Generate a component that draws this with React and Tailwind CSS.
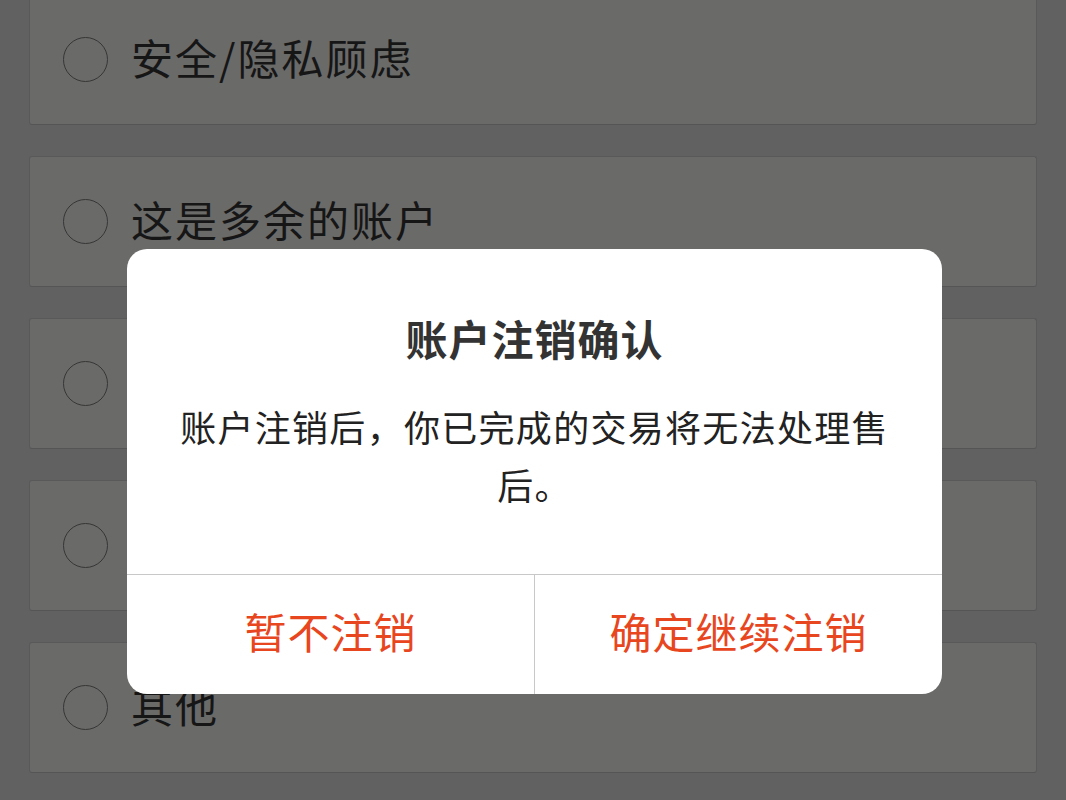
import React from "react";

const font = { fontFamily: '"Noto Sans CJK SC", "Noto Sans", sans-serif' };

function Card({ label }) {
  return (
    <div className="h-[131px] shrink-0 flex items-center pl-[33px] bg-[#6a6a69] border border-[#595959] border-b-[#555555] rounded-[3px]">
      <div className="w-[45px] h-[45px] rounded-full border-[1.5px] border-[#363636] shrink-0" />
      <span className="ml-[23px] mb-[6px] text-[42px] leading-none text-[#161616] tracking-[2px]">{label}</span>
    </div>
  );
}

export default function App() {
  return (
    <div className="relative w-[1066px] h-[800px] overflow-hidden bg-[#616161]" style={font}>
      <div className="flex flex-col gap-[31px] px-[29px] mt-[-6px] w-full">
        <Card label="安全/隐私顾虑" />
        <Card label="这是多余的账户" />
        <Card label="" />
        <Card label="" />
        <Card label="其他" />
      </div>

      <div className="absolute left-[127px] top-[249px] w-[815px] h-[445px] rounded-[20px] bg-white flex flex-col overflow-hidden">
        <div className="flex-1 flex flex-col items-center pt-[64px] px-[50px]">
          <div className="text-[42px] leading-[50px] font-bold text-[#333333] tracking-[1px]">账户注销确认</div>
          <div className="mt-[34px] text-[36px] leading-[58px] text-[#222222] text-center tracking-[1.3px]">
            账户注销后，你已完成的交易将无法处理售后。
          </div>
        </div>
        <div className="h-[120px] border-t-[1.5px] border-[#c8c8c8] flex">
          <div className="flex-1 flex items-center justify-center pb-[8px] text-[42px] text-[#e8461e] tracking-[1px] border-r-[1.5px] border-[#c8c8c8]">
            暂不注销
          </div>
          <div className="flex-1 flex items-center justify-center pb-[8px] text-[42px] text-[#e8461e] tracking-[1px]">
            确定继续注销
          </div>
        </div>
      </div>
    </div>
  );
}
